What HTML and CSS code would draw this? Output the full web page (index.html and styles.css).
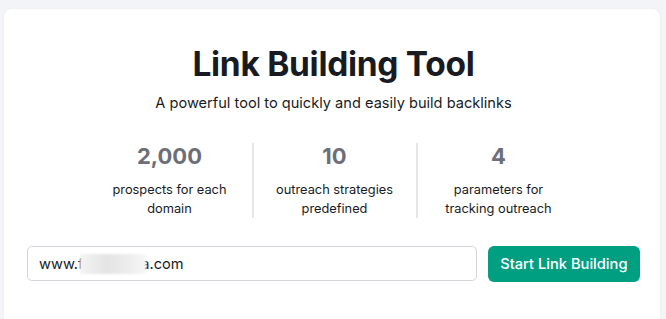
FILE: index.html
```html
<!DOCTYPE html>
<html>

<head>
	<meta charset="UTF-8">
	<title>Link Building Tool</title>
	<link rel="stylesheet" href="styles.css">
</head>

<body>

	<div class="card">
		<h1 class="title">Link Building Tool</h1>
		<p class="subtitle">A powerful tool to quickly and easily build backlinks</p>

		<div class="stats">
			<div class="stat">
				<div class="num">2,000</div>
				<div class="label">prospects for each<br>domain</div>
			</div>
			<div class="stat">
				<div class="num">10</div>
				<div class="label">outreach strategies<br>predefined</div>
			</div>
			<div class="stat">
				<div class="num">4</div>
				<div class="label">parameters for<br>tracking outreach</div>
			</div>
		</div>

		<form class="search">
			<div class="field">www.f<span class="blur"></span>a.com</div>
			<button type="button" class="btn">Start Link Building</button>
		</form>
	</div>

</body>

</html>
```

FILE: styles.css
```css
* { box-sizing: border-box; }

body {
	margin: 0;
	padding: 9px 6px 0 4px;
	background-color: #f3f4f7;
	font-family: Inter, "Liberation Sans", sans-serif;
	color: #191b23;
	height: 319px;
	overflow: hidden;
}

.card {
	background-color: #fff;
	border-radius: 8px 8px 0 0;
	height: 310px;
	padding: 33px 20px 0 23px;
	box-shadow: 0 0 2px rgba(0, 0, 0, 0.06);
}

.title {
	margin: 0;
	text-align: center;
	font-size: 33.5px;
	font-weight: 700;
	line-height: 44px;
	letter-spacing: -0.3px;
}

.subtitle {
	margin: 6px 0 0;
	text-align: center;
	font-size: 14.6px;
	line-height: 22px;
}

.stats {
	display: flex;
	justify-content: center;
	margin-top: 29px;
}

.stat {
	width: 164px;
	text-align: center;
	padding: 0 4px;
}

.stat + .stat {
	border-left: 2px solid #e6e7eb;
}

.num {
	font-size: 22px;
	font-weight: 700;
	color: #6c6e79;
	line-height: 26px;
}

.label {
	margin-top: 11px;
	font-size: 12.8px;
	line-height: 19px;
	color: #191b23;
}

.search {
	display: flex;
	gap: 11px;
	margin-top: 28px;
}

.field {
	flex: 1;
	height: 35px;
	border: 1px solid #d4d5da;
	border-radius: 5px;
	padding: 0 11px;
	display: flex;
	align-items: center;
	font-size: 14.6px;
	color: #191b23;
}

.blur {
	display: inline-block;
	position: relative;
	z-index: 1;
	width: 66px;
	height: 20px;
	margin: 0 -5px 0 -3px;
	background: linear-gradient(90deg, #f4f4f4, #e4e4e4 40%, #ececec 70%, #f7f7f7);
	filter: blur(1px);
}

.btn {
	height: 36px;
	padding: 0 12.5px;
	border: none;
	border-radius: 6px;
	background-color: #009f81;
	color: #fff;
	font-family: Inter, "Liberation Sans", sans-serif;
	font-size: 14.7px;
	font-weight: 500;
}
```
